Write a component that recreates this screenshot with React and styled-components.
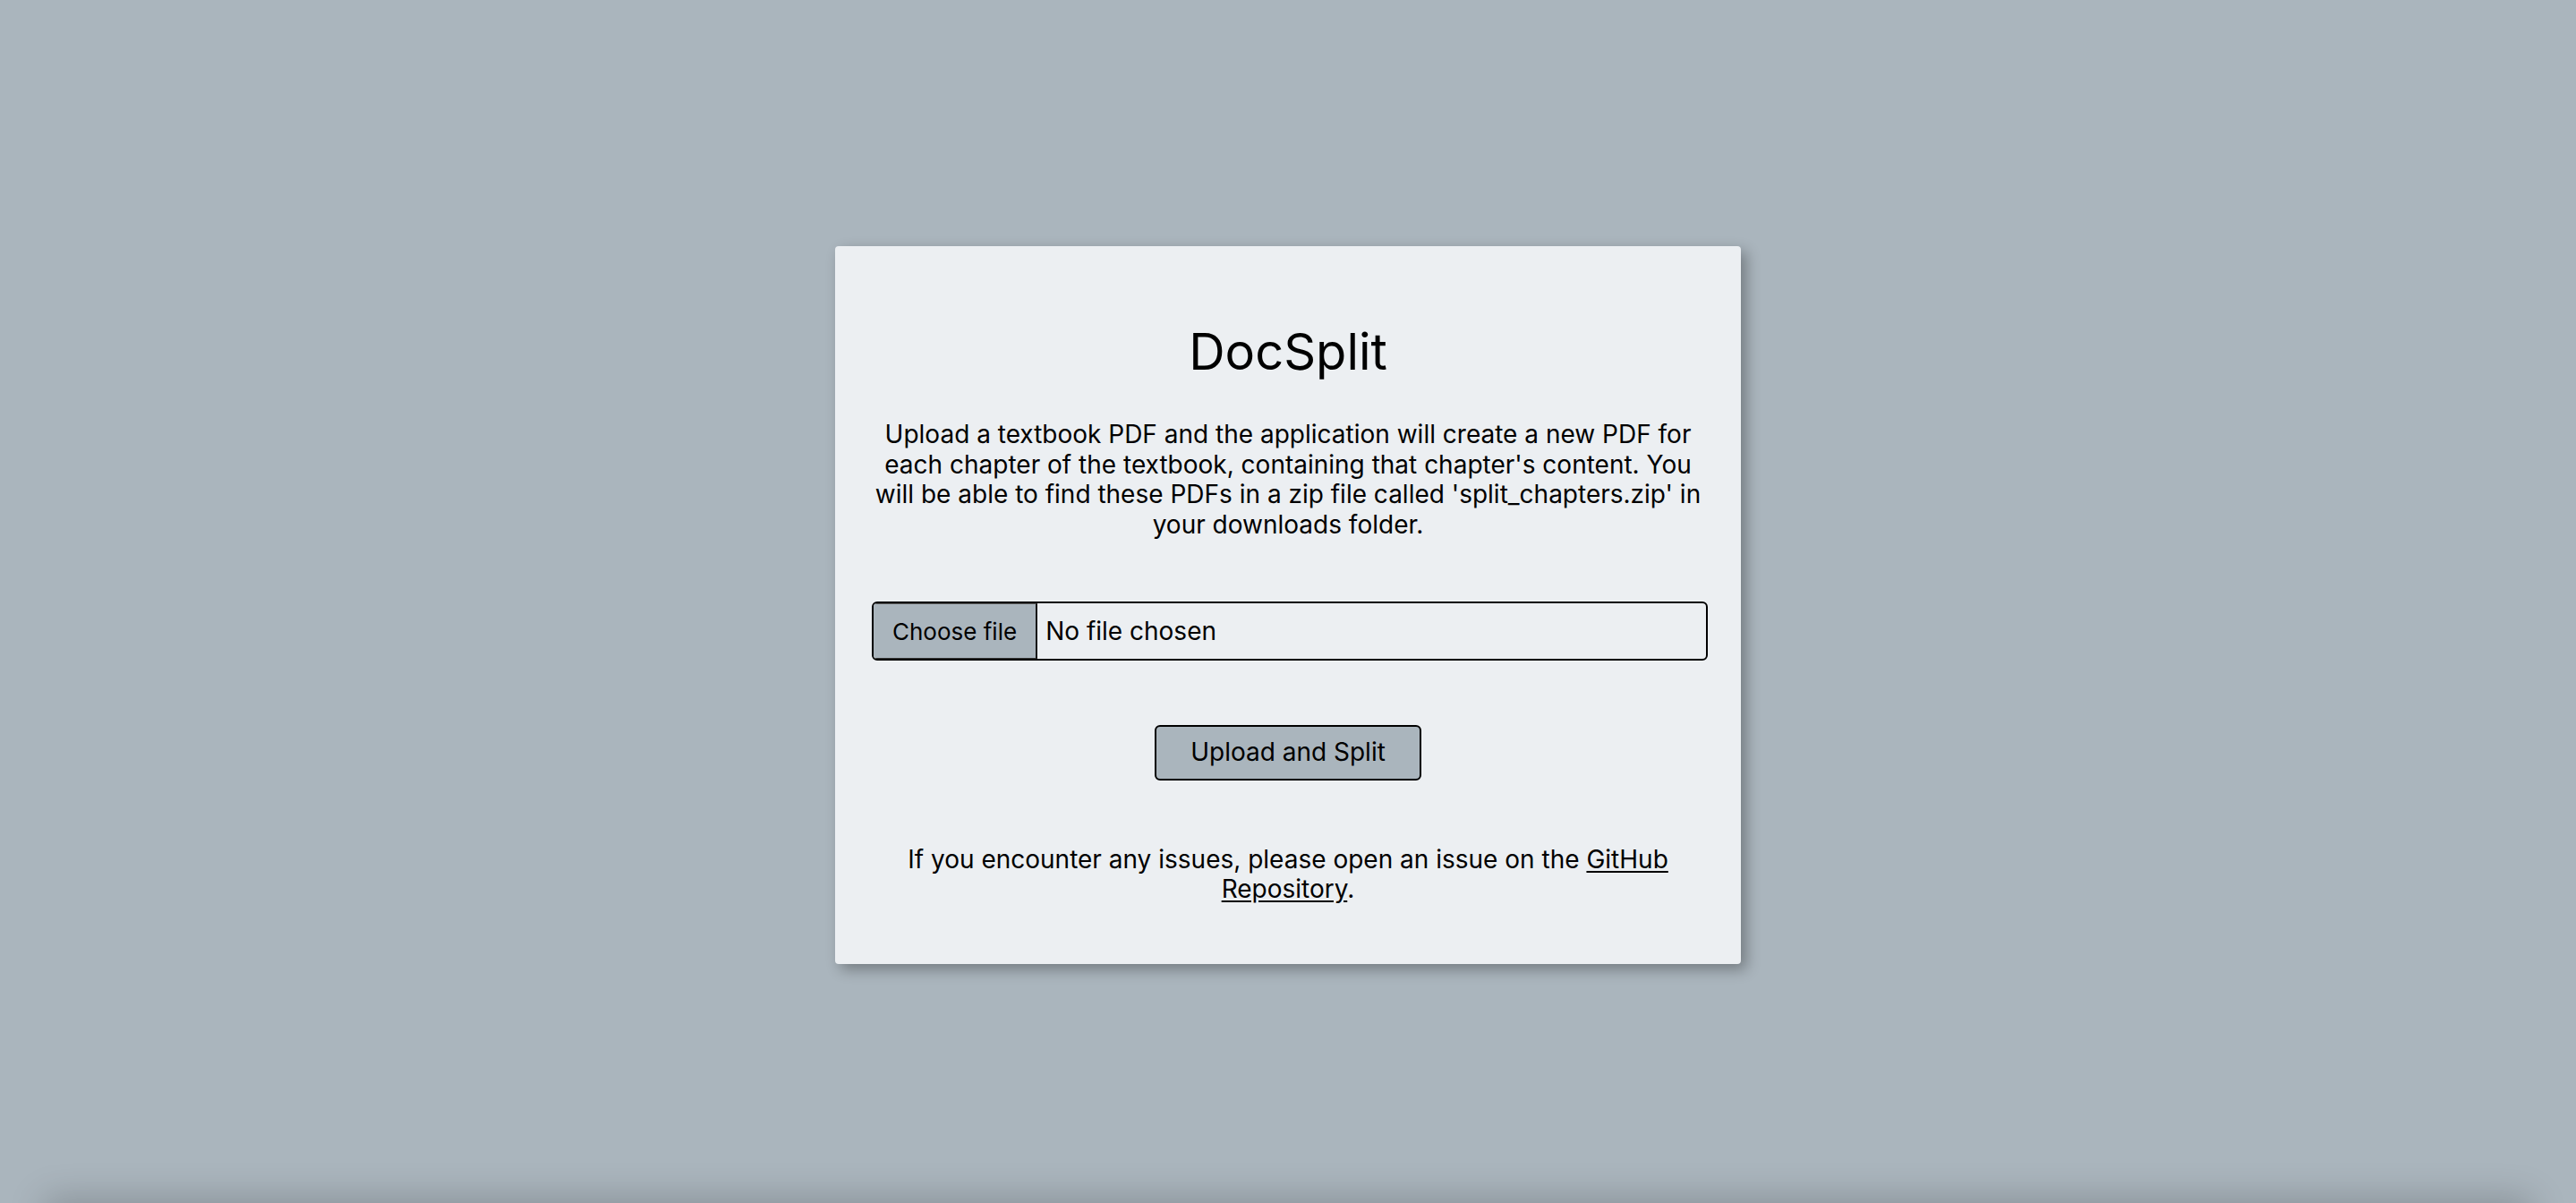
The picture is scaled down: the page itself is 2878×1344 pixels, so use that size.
import { createGlobalStyle, styled } from "styled-components";

const GlobalStyle = createGlobalStyle`
  html, body {
    margin: 0;
    padding: 0;
    overflow: hidden;
  }

  body {
    background-color: #aab5bd;
    font-family: Inter, "Noto Sans", sans-serif;
    color: #000;
  }
`;

const Page = styled.main`
  display: flex;
  align-items: center;
  justify-content: center;
  min-height: 100vh;
  box-sizing: border-box;
  padding-top: 8px;
`;

// shadow of the strip sitting just under the fold
const BottomShade = styled.div`
  height: 40px;
  margin: 0 50px;
  background-color: #aab5bd;
  box-shadow: 0 -4px 40px rgba(0, 0, 0, 0.22);
`;

const Card = styled.section`
  width: 1012px;
  box-sizing: border-box;
  padding: 84px 40px 66px;
  border-radius: 4px;
  background-color: #eceff2;
  box-shadow: 6px 6px 16px rgba(0, 0, 0, 0.32);
`;

const Title = styled.h1`
  margin: 0 0 42px;
  font-size: 56px;
  font-weight: 400;
  line-height: normal;
  text-align: center;
`;

const Text = styled.p`
  margin: ${(p) => (p.$last ? "0" : "0 0 69px")};
  font-size: 28px;
  line-height: 1.2;
  text-align: center;

  a {
    color: #000;
    text-decoration: underline;
    text-underline-offset: 3px;
  }
`;

const FilePicker = styled.label`
  display: flex;
  align-items: stretch;
  height: 66px;
  box-sizing: border-box;
  margin: 0 -3px 72px 1px;
  border: 2px solid #000;
  border-radius: 6px;
  overflow: hidden;
  font-size: 28px;
  cursor: pointer;

  input {
    display: none;
  }
`;

const ChooseButton = styled.span`
  display: flex;
  align-items: center;
  padding: 0 21px;
  background-color: #aab5bd;
  border-top: 1px solid #555;
  border-bottom: 1px solid #333;
  border-right: 2px solid #111;
  font-size: 26px;
`;

const FileName = styled.span`
  display: flex;
  align-items: center;
  padding-left: 9px;
`;

const UploadButton = styled.button`
  display: block;
  margin: 0 auto 72px;
  padding: 12px 38px;
  border: 2px solid #000;
  border-radius: 6px;
  background-color: #aab5bd;
  font-family: inherit;
  font-size: 28px;
  line-height: 1.2;
  color: #000;
  cursor: pointer;
`;

function App() {
  return (
    <>
      <GlobalStyle />
      <Page>
        <Card>
          <Title>DocSplit</Title>
          <Text>
            Upload a textbook PDF and the application will create a new PDF for
            each chapter of the textbook, containing that chapter's content. You
            will be able to find these PDFs in a zip file called
            'split_chapters.zip' in your downloads folder.
          </Text>

          <FilePicker>
            <input type="file" accept="application/pdf" />
            <ChooseButton>Choose file</ChooseButton>
            <FileName>No file chosen</FileName>
          </FilePicker>

          <UploadButton type="button">Upload and Split</UploadButton>

          <Text $last>
            If you encounter any issues, please open an issue on the{" "}
            <a href="#">GitHub Repository</a>.
          </Text>
        </Card>
      </Page>
      <BottomShade />
    </>
  );
}

export default App;
